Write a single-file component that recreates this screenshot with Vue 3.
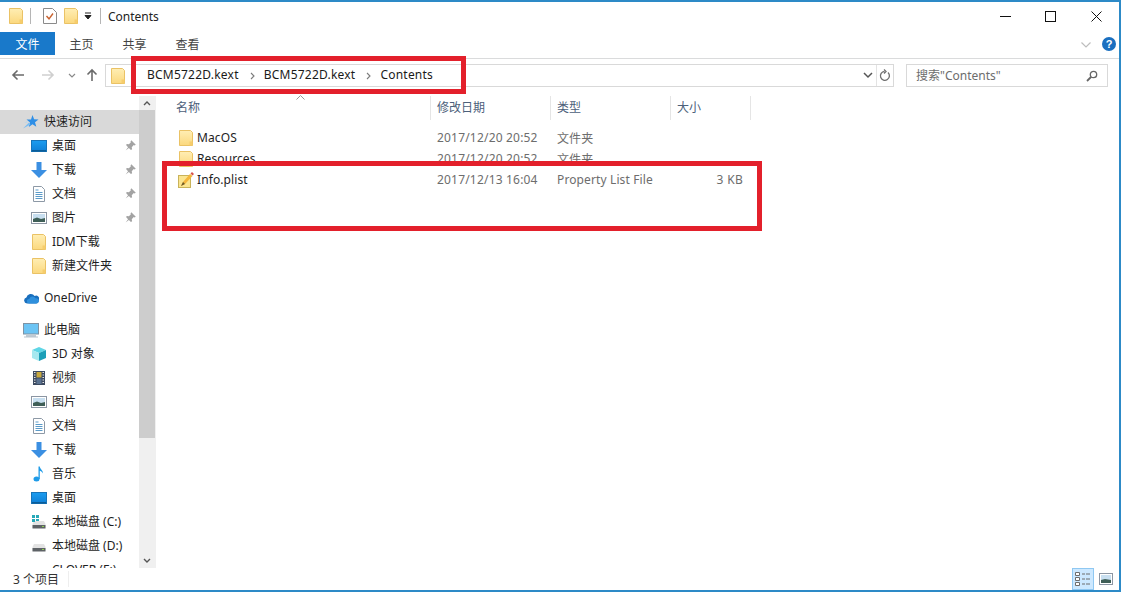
<script setup>
const tabs = ['主页', '共享', '查看']
const nav = [
  { t: '快速访问', i: 'star', lvl: 1, sel: true, top: 0 },
  { t: '桌面', i: 'desk', lvl: 2, pin: true },
  { t: '下载', i: 'down', lvl: 2, pin: true },
  { t: '文档', i: 'doc', lvl: 2, pin: true },
  { t: '图片', i: 'pic', lvl: 2, pin: true },
  { t: 'IDM下载', i: 'folder', lvl: 2 },
  { t: '新建文件夹', i: 'folder', lvl: 2 },
  { t: 'OneDrive', i: 'cloud', lvl: 1, gap: true },
  { t: '此电脑', i: 'pc', lvl: 1, gap: true },
  { t: '3D 对象', i: 'cube', lvl: 2 },
  { t: '视频', i: 'film', lvl: 2 },
  { t: '图片', i: 'pic', lvl: 2 },
  { t: '文档', i: 'doc', lvl: 2 },
  { t: '下载', i: 'down', lvl: 2 },
  { t: '音乐', i: 'note', lvl: 2 },
  { t: '桌面', i: 'desk', lvl: 2 },
  { t: '本地磁盘 (C:)', i: 'sys', lvl: 2 },
  { t: '本地磁盘 (D:)', i: 'drive', lvl: 2 },
  { t: 'CLOVER (E:)', i: 'drive', lvl: 2 },
]
const cols = [
  { t: '名称', w: 261 },
  { t: '修改日期', w: 120 },
  { t: '类型', w: 120 },
  { t: '大小', w: 80 },
]
const files = [
  { n: 'MacOS', d: '2017/12/20 20:52', k: '文件夹', s: '', i: 'folder' },
  { n: 'Resources', d: '2017/12/20 20:52', k: '文件夹', s: '', i: 'folder' },
  { n: 'Info.plist', d: '2017/12/13 16:04', k: 'Property List File', s: '3 KB', i: 'plist' },
]
</script>

<template>
  <div class="win">
    <svg class="defs" aria-hidden="true">
      <defs>
        <linearGradient id="fy" x1="0" y1="0" x2="0" y2="1"><stop offset="0" stop-color="#ffeeb4"/><stop offset="1" stop-color="#fbd87e"/></linearGradient>
        <linearGradient id="bl" x1="0" y1="0" x2="0" y2="1"><stop offset="0" stop-color="#1c9df0"/><stop offset="1" stop-color="#0f7fd6"/></linearGradient>
      </defs>
      <symbol id="folder" viewBox="0 0 16 16">
        <path d="M1.500.5h11l2 2v13h-13z" fill="url(#fy)" stroke="#eac265"/>
        <path d="M11.500 11.500h3v4h-3z" fill="#f6cd6c"/>
      </symbol>
      <symbol id="check" viewBox="0 0 16 16">
        <path d="M1.500.5h9l4 4v11h-13z" fill="#fff" stroke="#8b8b8b"/>
        <path d="M4.500 8l2.500 2.800L11 5.500" fill="none" stroke="#c8622f" stroke-width="1.400"/>
      </symbol>
      <symbol id="star" viewBox="0 0 16 16">
        <path d="M9.500 1l1.600 4.300 4.400.2-3.500 2.800 1.300 4.400-3.800-2.500L5.800 13l1.200-4.500L3.500 5.600l4.500-.2z" fill="#2f8fe6"/>
        <path d="M0 14.500l6-6 1.500 2z" fill="#7bbdf2"/>
        <path d="M1 8.500l3-1 .5 1z" fill="#a9d4f5"/>
      </symbol>
      <symbol id="desk" viewBox="0 0 16 16">
        <rect x=".5" y="2.500" width="15" height="11" fill="url(#bl)" stroke="#1874b8"/>
        <path d="M1 12h14v1.500H1z" fill="#0b5d99"/>
      </symbol>
      <symbol id="down" viewBox="0 0 16 16">
        <path d="M5.500 0h5v8H16l-8 8-8-8h5.500z" fill="#3b8fe2"/>
      </symbol>
      <symbol id="doc" viewBox="0 0 16 16">
        <path d="M2.500.5h8l3 3v12h-11z" fill="#fff" stroke="#8d99a6"/>
        <path d="M4.500 4h3M4.500 6.500h7M4.500 8.500h7M4.500 10.500h7M4.500 12.500h7" stroke="#5b9bc9" fill="none"/>
      </symbol>
      <symbol id="pic" viewBox="0 0 16 16">
        <rect x=".5" y="2.500" width="15" height="11" fill="#fff" stroke="#8c96a3"/>
        <rect x="2" y="4" width="12" height="8" fill="#c8dff0"/>
        <path d="M2 9l4-1.500 4 1.500 4-1v4H2z" fill="#3f5f57"/>
      </symbol>
      <symbol id="pin" viewBox="0 0 16 16">
        <path d="M9 1.500l5.500 5.500-1.500 1-1-.5-2.500 2.500.5 2.500-1.500 1-2.500-2.500L2 14l3-4-2.500-2.500 1-1.500 2.500.5L8.500 4 8 3z" fill="#a3a3a3"/>
      </symbol>
      <symbol id="cloud" viewBox="0 0 16 16">
        <path d="M4 13.500a3 3 0 0 1-.6-5.900A4.500 4.500 0 0 1 11.600 6 3 3 0 0 1 15.800 10c.3 1.800-1 3.500-2.800 3.500z" fill="#1a6fbd"/>
        <path d="M6 13.500a2.300 2.300 0 0 1 .2-4.600 3.400 3.400 0 0 1 6.300-.6 2.700 2.700 0 0 1 3.300 2.700c0 1.400-1 2.500-2.600 2.500z" fill="#2f90dd"/>
      </symbol>
      <symbol id="pc" viewBox="0 0 16 16">
        <rect x=".5" y="1.500" width="15" height="10.500" fill="#6cc4f4" stroke="#7f93a4"/>
        <path d="M3 13.500h10v1H3z" fill="#8296a8"/>
        <path d="M1 14.500h14v1H1z" fill="#b6c2cc"/>
      </symbol>
      <symbol id="cube" viewBox="0 0 16 16">
        <path d="M8 1l7 3-7 3-7-3z" fill="#5fd6e6"/>
        <path d="M1 4l7 3v8l-7-3z" fill="#a6e8ef"/>
        <path d="M15 4L8 7v8l7-3z" fill="#1c9fb8"/>
      </symbol>
      <symbol id="film" viewBox="0 0 16 16">
        <rect x="2" y="1" width="12" height="14" fill="#3c4a60"/>
        <path d="M3 2.500h1.500M3 5h1.500M3 7.500h1.500M3 10h1.500M3 12.500h1.500M11.500 2.500H13M11.500 5H13M11.500 7.500H13M11.500 10H13M11.500 12.500H13" stroke="#e6e6e6"/>
        <rect x="5.500" y="2" width="5" height="5.500" fill="#c8a93e"/>
        <rect x="5.500" y="8.500" width="5" height="5.500" fill="#5b7391"/>
      </symbol>
      <symbol id="note" viewBox="0 0 16 16">
        <ellipse cx="5.500" cy="13" rx="3" ry="2.500" fill="#1e9be8"/>
        <path d="M7.500 13V.5h1.300c.3 2.500 3.200 3.500 3.200 7-1-2-2.500-2.500-3.200-2.800V13z" fill="#1e9be8"/>
      </symbol>
      <symbol id="sys" viewBox="0 0 16 16">
        <path d="M1.500 10l1.500-3h10l1.500 3v4h-13z" fill="#e3e3e3"/>
        <path d="M1.500 11h13v3.500h-13z" fill="#5e6266"/>
        <path d="M11 12.500h2" stroke="#8fd14f"/>
        <path d="M1 1h3v3H1zM5 1h3v3H5zM1 5h3v3H1zM5 5h3v2H5z" fill="#27a9b8"/>
      </symbol>
      <symbol id="drive" viewBox="0 0 16 16">
        <path d="M1.500 9l1.500-3h10l1.500 3v4h-13z" fill="#e3e3e3"/>
        <path d="M1.500 10h13v3.500h-13z" fill="#5e6266"/>
        <path d="M11 11.500h2" stroke="#8fd14f"/>
      </symbol>
      <symbol id="plist" viewBox="0 0 16 16">
        <rect x=".5" y="3.500" width="12" height="12" fill="#fbe58f" stroke="#c9b35a"/>
        <path d="M3 14l2-4 7-8 2.500 2-7.500 8z" fill="#f4b63c"/>
        <path d="M3 14l2-4 2 2z" fill="#6b5a2a"/>
        <path d="M12.500 1.500l2 2L16 2 14 0z" fill="#d8534a"/>
      </symbol>
    </svg>

    <header class="title">
      <svg class="ic t1"><use href="#folder"/></svg>
      <i class="vsep"></i>
      <svg class="ic t2"><use href="#check"/></svg>
      <svg class="ic t3"><use href="#folder"/></svg>
      <svg class="qat" viewBox="0 0 8 8"><path d="M1 1h6M1 3.500h6L4 7z" stroke="#222" fill="#222"/></svg>
      <i class="vsep s2"></i>
      <span class="ttext">Contents</span>
      <span class="caps">
        <svg viewBox="0 0 11 11" class="cap"><path d="M0 5.500h11" stroke="#111"/></svg>
        <svg viewBox="0 0 11 11" class="cap c2"><rect x=".5" y=".5" width="10" height="10" fill="none" stroke="#111"/></svg>
        <svg viewBox="0 0 11 11" class="cap c3"><path d="M.5.500l10 10M10.500.500l-10 10" stroke="#111" fill="none"/></svg>
      </span>
    </header>

    <nav class="tabs">
      <span class="file">文件</span>
      <span v-for="t in tabs" :key="t" class="tab">{{ t }}</span>
      <svg class="rchev" viewBox="0 0 10 6"><path d="M.5.500L5 5 9.500.500" fill="none" stroke="#bdbdbd" stroke-width="1.200"/></svg>
      <span class="help">?</span>
    </nav>

    <section class="addr">
      <svg class="nv back" viewBox="0 0 14 12"><path d="M13 6H2M6.500 1.500L2 6l4.500 4.500" fill="none" stroke="#6b6b6b" stroke-width="1.600"/></svg>
      <svg class="nv fwd" viewBox="0 0 14 12"><path d="M1 6h11M7.500 1.500L12 6l-4.500 4.500" fill="none" stroke="#cfcfcf" stroke-width="1.600"/></svg>
      <svg class="nv hist" viewBox="0 0 8 5"><path d="M1 1l3 3 3-3" fill="none" stroke="#8a8a8a" stroke-width="1.200"/></svg>
      <svg class="nv up" viewBox="0 0 12 14"><path d="M6 13V2M1.500 6.500L6 2l4.500 4.500" fill="none" stroke="#6b6b6b" stroke-width="1.600"/></svg>
      <div class="path">
        <svg class="ic pf"><use href="#folder"/></svg>
        <span class="crumb">BCM5722D.kext</span>
        <svg class="gt" viewBox="0 0 5 8"><path d="M1 1l3 3-3 3" fill="none" stroke="#7b7b7b" stroke-width="1.100"/></svg>
        <span class="crumb">BCM5722D.kext</span>
        <svg class="gt" viewBox="0 0 5 8"><path d="M1 1l3 3-3 3" fill="none" stroke="#7b7b7b" stroke-width="1.100"/></svg>
        <span class="crumb">Contents</span>
        <svg class="dd" viewBox="0 0 10 7"><path d="M1 1l4 4 4-4" fill="none" stroke="#555" stroke-width="1.500"/></svg>
        <span class="ref">
          <svg viewBox="0 0 12 14" width="12" height="14"><path d="M9 3.500a4.500 4.500 0 1 1-3.500-1.200M5 .5l2 2-2 2" fill="none" stroke="#6f6f6f" stroke-width="1.300"/></svg>
        </span>
      </div>
      <div class="search">
        <span class="stext">搜索"Contents"</span>
        <svg viewBox="0 0 12 12" width="12" height="12"><circle cx="7.500" cy="4.500" r="3.200" fill="none" stroke="#666" stroke-width="1.300"/><path d="M5 7l-4 4" stroke="#666" stroke-width="1.800"/></svg>
      </div>
    </section>

    <main class="body">
      <aside class="side">
        <div class="tree">
          <div v-for="(n, k) in nav" :key="k" class="node" :class="{ sel: n.sel, l2: n.lvl === 2, gap: n.gap }">
            <svg class="ic"><use :href="'#' + n.i"/></svg>
            <span class="label">{{ n.t }}</span>
            <svg v-if="n.pin" class="pinned"><use href="#pin"/></svg>
          </div>
        </div>
        <div class="sbar">
          <div class="sb-btn top"><svg viewBox="0 0 8 5" width="8" height="5"><path d="M1 4l3-3 3 3" fill="none" stroke="#555" stroke-width="1.400"/></svg></div>
          <div class="thumb"></div>
          <div class="track"></div>
          <div class="sb-btn bot"><svg viewBox="0 0 8 5" width="8" height="5"><path d="M1 1l3 3 3-3" fill="none" stroke="#555" stroke-width="1.400"/></svg></div>
        </div>
      </aside>

      <section class="list">
        <div class="head">
          <span v-for="c in cols" :key="c.t" class="hc" :style="{ width: c.w + 'px' }">{{ c.t }}</span>
          <svg class="sort" viewBox="0 0 9 5"><path d="M.5 4.500L4.500.5l4 4" fill="none" stroke="#9a9a9a"/></svg>
        </div>
        <div v-for="f in files" :key="f.n" class="row">
          <span class="cell name"><svg class="ic"><use :href="'#' + f.i"/></svg>{{ f.n }}</span>
          <span class="cell date">{{ f.d }}</span>
          <span class="cell kind">{{ f.k }}</span>
          <span class="cell size">{{ f.s }}</span>
        </div>
      </section>
    </main>

    <footer class="status">
      <span class="count">3 个项目</span>
      <i class="stsep"></i>
      <span class="vbtn on">
        <svg viewBox="0 0 16 14" width="16" height="14"><path d="M.5.5h4v3h-4zM.5 5.500h4v3h-4zM.5 10.500h4v3h-4z" fill="#fff" stroke="#6d6d6d"/><path d="M7 2h3M11 2h4M7 7h3M11 7h4M7 12h3M11 12h4" stroke="#6d6d6d"/></svg>
      </span>
      <span class="vbtn">
        <svg viewBox="0 0 14 12" width="14" height="12"><rect x=".5" y=".5" width="13" height="11" fill="#fff" stroke="#8c96a3"/><rect x="2" y="2" width="10" height="8" fill="#c8dff0"/><path d="M2 7l4-1 6 1v3H2z" fill="#3f5f57"/></svg>
      </span>
    </footer>

    <div class="mark m1"></div>
    <div class="mark m2"></div>
  </div>
</template>

<style scoped>
.win {
  position: relative;
  width: 1121px;
  height: 592px;
  box-sizing: border-box;
  border-top: 2px solid #2d8ac7;
  border-right: 2px solid #2d8ac7;
  border-bottom: 2px solid #2d8ac7;
  background: #fff;
  display: flex;
  flex-direction: column;
  overflow: hidden;
  font: 12px "Noto Sans", "Noto Sans CJK SC", sans-serif;
  color: #1a1a1a;
}
.defs { position: absolute; width: 0; height: 0; }
.ic { width: 16px; height: 16px; flex: none; display: block; }

.title { height: 30px; flex: none; display: flex; align-items: center; position: relative; padding-bottom: 2px; box-sizing: border-box; }
.t1 { margin-left: 8px; }
.vsep { width: 1px; height: 16px; background: #b5b5b5; margin-left: 6px; flex: none; }
.t2 { margin-left: 11px; }
.t3 { margin-left: 5px; }
.qat { width: 8px; height: 8px; margin-left: 5px; }
.s2 { margin-left: 8px; }
.ttext { margin-left: 7px; color: #222; }
.caps { margin-left: auto; display: flex; align-items: center; padding-right: 17px; }
.cap { height: 11px; width: 11px; display: block; }
.cap.c2 { margin-left: 34px; }
.cap.c3 { margin-left: 35px; }

.tabs { height: 26px; flex: none; box-sizing: content-box; border-bottom: 1px solid #dadbdc; display: flex; align-items: flex-start; }
.file { width: 55px; height: 23px; line-height: 25px; text-align: center; background: #1979ca; color: #fff; }
.tab { width: 53px; line-height: 25px; text-align: center; color: #444; }
.rchev { width: 10px; height: 6px; margin: 10px 0 0 auto; position: relative; left: 1px; }
.help { width: 14px; height: 14px; border-radius: 50%; background: #1a6fc0; color: #fff; font: bold 11px/14px "Liberation Sans", sans-serif; text-align: center; margin: 5px 3px 0 12px; }

.addr { height: 37px; flex: none; position: relative; display: flex; align-items: flex-start; padding-top: 5px; box-sizing: border-box; }
.nv { display: block; flex: none; }
.back { width: 14px; height: 12px; margin: 5px 0 0 11px; }
.fwd { width: 14px; height: 12px; margin: 5px 0 0 16px; }
.hist { width: 8px; height: 5px; margin: 9px 0 0 13px; }
.up { width: 12px; height: 14px; margin: 4px 0 0 10px; }
.path { margin-left: 7px; width: 789px; height: 23px; box-sizing: border-box; border: 1px solid #d9d9d9; display: flex; align-items: center; color: #1a1a1a; }
.pf { margin-left: 4px; margin-right: 21px; }
.crumb { letter-spacing: .22px; margin-top: -2px; }
.gt { width: 5px; height: 8px; margin: 0 9px 0 11px; flex: none; }
.dd { width: 10px; height: 7px; margin-left: auto; margin-right: 3px; flex: none; }
.ref { width: 16px; height: 21px; border-left: 1px solid #e3e3e3; display: flex; align-items: center; justify-content: center; flex: none; }
.search { margin-left: 12px; width: 202px; height: 23px; box-sizing: border-box; border: 1px solid #d9d9d9; display: flex; align-items: center; justify-content: space-between; padding: 0 9px; color: #6d6d6d; }
.stext { margin-top: -2px; }

.body { flex: 1; min-height: 0; display: flex; }
.side { width: 156px; flex: none; display: flex; border-right: 1px solid #f0f0f0; box-sizing: border-box; }
.tree { width: 139px; flex: none; padding-top: 14px; box-sizing: border-box; overflow: hidden; }
.node { height: 24px; display: flex; align-items: center; padding-left: 23px; position: relative; white-space: nowrap; color: #1e1e1e; }
.node.l2 { padding-left: 31px; }
.node.gap { margin-top: 8px; }
.node.sel { background: #d9d9d9; }
.label { margin: -2px 0 0 5px; }
.pinned { position: absolute; left: 124px; top: 5px; width: 13px; height: 13px; }
.sbar { width: 16px; flex: none; background: #f0f0f0; display: flex; flex-direction: column; }
.sb-btn { display: flex; align-items: center; justify-content: center; flex: none; }
.sb-btn.top { height: 14px; }
.sb-btn.bot { height: 16px; }
.thumb { height: 328px; background: #cdcdcd; flex: none; }
.track { flex: 1; }

.list { flex: 1; min-width: 0; padding-left: 14px; }
.head { height: 24px; display: flex; margin-bottom: 7px; position: relative; }
.hc { box-sizing: border-box; height: 24px; line-height: 23px; padding-left: 6px; color: #4c607a; border-right: 1px solid #e5e5e5; flex: none; }
.sort { position: absolute; left: 126px; top: -1px; width: 9px; height: 5px; }
.row { height: 21px; display: flex; align-items: center; white-space: nowrap; }
.cell { flex: none; color: #6d6d6d; }
.name { width: 261px; display: flex; align-items: center; color: #1e1e1e; padding-left: 8px; box-sizing: border-box; letter-spacing: .1px; }
.name .ic { margin-right: 3px; }
.date { width: 120px; padding-left: 6px; box-sizing: border-box; letter-spacing: .19px; }
.kind { width: 120px; padding-left: 6px; box-sizing: border-box; letter-spacing: .12px; }
.size { width: 72px; text-align: right; letter-spacing: .3px; }

.status { height: 22px; flex: none; display: flex; align-items: center; position: relative; }
.count { margin-left: 13px; color: #333; }
.stsep { width: 1px; height: 16px; background: #eee; margin-left: 9px; }
.vbtn { display: flex; align-items: center; justify-content: center; height: 22px; box-sizing: border-box; }
.vbtn.on { width: 22px; margin-left: auto; background: #cce8ff; border: 1px solid #8fc8f2; }
.vbtn:last-child { width: 17px; margin: 0 5px 0 3px; }

.mark { position: absolute; border: 5px solid #e3202b; box-sizing: border-box; pointer-events: none; }
.m1 { left: 131px; top: 54px; width: 335px; height: 38px; }
.m2 { left: 162px; top: 159px; width: 600px; height: 70px; }
</style>
